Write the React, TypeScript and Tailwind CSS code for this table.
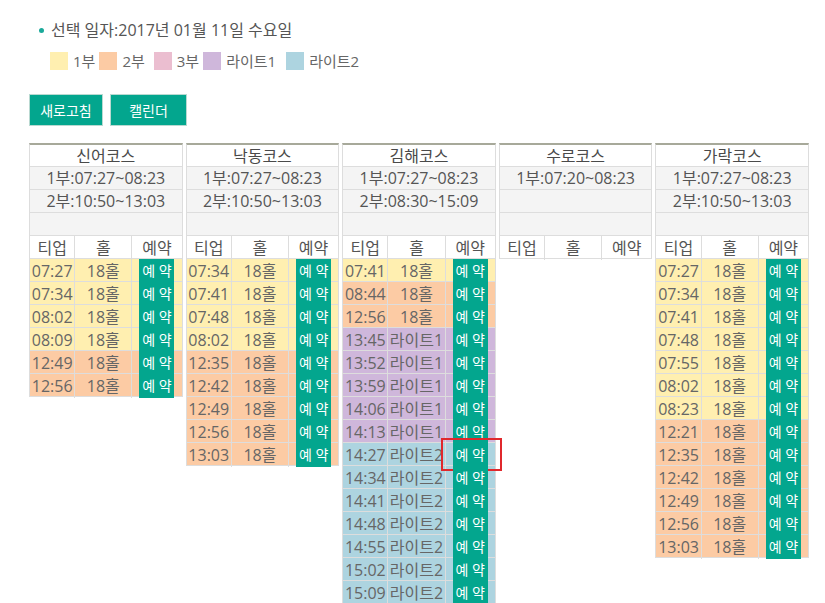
import React from "react";

type Part = "p1" | "p2" | "l1" | "l2";

type Course = {
  name: string;
  info: string[];
  rows: [string, Part][];
};

const partBg: Record<Part, string> = {
  p1: "bg-[#ffefb0]",
  p2: "bg-[#fccba4]",
  l1: "bg-[#cfb7db]",
  l2: "bg-[#add4e0]",
};

const holeLabel: Record<Part, string> = {
  p1: "18홀",
  p2: "18홀",
  l1: "라이트1",
  l2: "라이트2",
};

const courses: Course[] = [
  {
    name: "신어코스",
    info: ["1부:07:27~08:23", "2부:10:50~13:03", ""],
    rows: [
      ["07:27", "p1"],
      ["07:34", "p1"],
      ["08:02", "p1"],
      ["08:09", "p1"],
      ["12:49", "p2"],
      ["12:56", "p2"],
    ],
  },
  {
    name: "낙동코스",
    info: ["1부:07:27~08:23", "2부:10:50~13:03", ""],
    rows: [
      ["07:34", "p1"],
      ["07:41", "p1"],
      ["07:48", "p1"],
      ["08:02", "p1"],
      ["12:35", "p2"],
      ["12:42", "p2"],
      ["12:49", "p2"],
      ["12:56", "p2"],
      ["13:03", "p2"],
    ],
  },
  {
    name: "김해코스",
    info: ["1부:07:27~08:23", "2부:08:30~15:09", ""],
    rows: [
      ["07:41", "p1"],
      ["08:44", "p2"],
      ["12:56", "p2"],
      ["13:45", "l1"],
      ["13:52", "l1"],
      ["13:59", "l1"],
      ["14:06", "l1"],
      ["14:13", "l1"],
      ["14:27", "l2"],
      ["14:34", "l2"],
      ["14:41", "l2"],
      ["14:48", "l2"],
      ["14:55", "l2"],
      ["15:02", "l2"],
      ["15:09", "l2"],
    ],
  },
  {
    name: "수로코스",
    info: ["1부:07:20~08:23", "", ""],
    rows: [],
  },
  {
    name: "가락코스",
    info: ["1부:07:27~08:23", "2부:10:50~13:03", ""],
    rows: [
      ["07:27", "p1"],
      ["07:34", "p1"],
      ["07:41", "p1"],
      ["07:48", "p1"],
      ["07:55", "p1"],
      ["08:02", "p1"],
      ["08:23", "p1"],
      ["12:21", "p2"],
      ["12:35", "p2"],
      ["12:42", "p2"],
      ["12:49", "p2"],
      ["12:56", "p2"],
      ["13:03", "p2"],
    ],
  },
];

const legend = [
  { label: "1부", color: "bg-[#ffefb0]", gap: "mr-[4px]" },
  { label: "2부", color: "bg-[#fccba4]", gap: "mr-[9px]" },
  { label: "3부", color: "bg-[#ebbed0]", gap: "mr-[4px]" },
  { label: "라이트1", color: "bg-[#cfb7db]", gap: "mr-[10px]" },
  { label: "라이트2", color: "bg-[#add4e0]", gap: "" },
];

function CourseTable({ course }: { course: Course }) {
  return (
    <div className="border-t-2 border-t-[#a7a99a] border-l border-r border-l-[#dddddd] border-r-[#dddddd] text-[16px]">
      <div className="h-[22px] border-b border-[#dddddd] bg-white flex items-center justify-center text-[#4a4a4a]">
        {course.name}
      </div>
      {course.info.map((line, i) => (
        <div key={i} className="h-[23px] border-b border-[#dddddd] bg-[#f4f4f4] flex items-center justify-center text-[#555]">
          {line}
        </div>
      ))}
      <div className="h-[23px] border-b border-[#dddddd] bg-white grid grid-cols-[46fr_58fr_50fr] text-[#555]">
        <div className="border-r border-[#dddddd] flex items-center justify-center">티업</div>
        <div className="border-r border-[#dddddd] flex items-center justify-center">홀</div>
        <div className="flex items-center justify-center">예약</div>
      </div>
      {course.rows.map(([time, part]) => {
        const marked = course.name === "김해코스" && time === "14:27";
        return (
          <div key={time} className={`h-[23px] border-b border-[#dddddd] grid grid-cols-[46fr_58fr_50fr] text-[#666] ${partBg[part]}`}>
            <div className="border-r border-[#dddddd] flex items-center justify-center">{time}</div>
            <div className="border-r border-[#dddddd] flex items-center justify-center whitespace-nowrap overflow-hidden">{holeLabel[part]}</div>
            <div className="relative flex justify-center">
              <button className="w-[35px] h-full bg-[#03a68e] text-white text-[14px] leading-none whitespace-nowrap">예 약</button>
              {marked && (
                <span className="absolute -left-[5px] -top-[5px] w-[61px] h-[33px] border-2 border-[#e0282c] pointer-events-none" />
              )}
            </div>
          </div>
        );
      })}
    </div>
  );
}

export default function App() {
  return (
    <div
      className="min-h-screen bg-white pl-[29px] pt-[19px] text-[#555]"
      style={{ fontFamily: '"Open Sans", "Noto Sans CJK KR", sans-serif' }}
    >
      <div className="flex items-center h-[22px] text-[16px]">
        <span className="ml-[10px] mr-[7px] h-[5px] w-[5px] rounded-full bg-[#1aa99a]" />
        <span>선택 일자:2017년 01월 11일 수요일</span>
      </div>

      <div className="mt-[11px] ml-[21px] flex items-center h-[18px] text-[15px] text-[#666]">
        {legend.map((l) => (
          <div key={l.label} className={`flex items-center ${l.gap}`}>
            <span className={`h-[18px] w-[18px] ${l.color}`} />
            <span className="ml-[5px]">{l.label}</span>
          </div>
        ))}
      </div>

      <div className="mt-[24px] flex gap-[7px]">
        <button className="h-[32px] w-[74px] bg-[#03a68e] border border-[#b9d9d1] text-white text-[14px]">새로고침</button>
        <button className="h-[32px] w-[77px] bg-[#03a68e] border border-[#b9d9d1] text-white text-[14px]">캘린더</button>
      </div>

      <div className="mt-[17px] w-[780px] grid grid-cols-5 gap-[3px] items-start">
        {courses.map((c) => (
          <CourseTable key={c.name} course={c} />
        ))}
      </div>
    </div>
  );
}
